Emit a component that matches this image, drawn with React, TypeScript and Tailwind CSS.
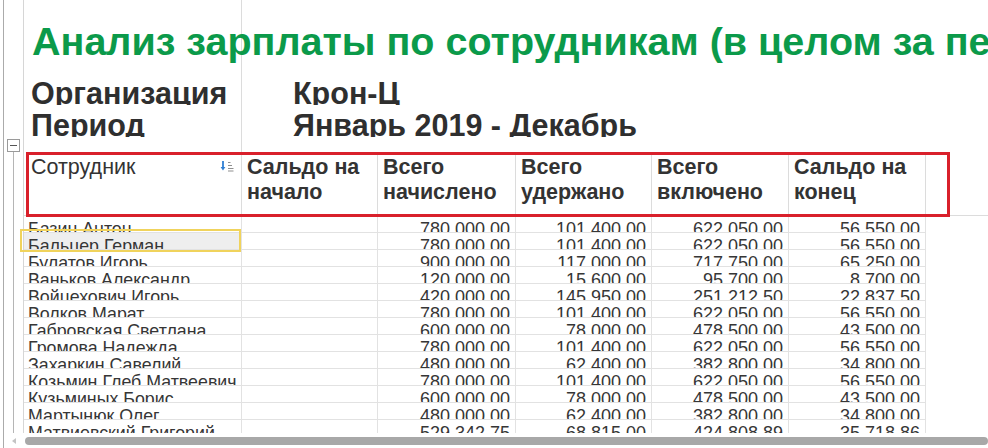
import React from "react";

const colW = ["w-[218px]", "w-[136px]", "w-[138px]", "w-[136px]", "w-[137px]", "w-[137px]"];

const rows: string[][] = [
  ["Базин Антон", "", "780 000.00", "101 400.00", "622 050.00", "56 550.00"],
  ["Бальцер Герман", "", "780 000.00", "101 400.00", "622 050.00", "56 550.00"],
  ["Булатов Игорь", "", "900 000.00", "117 000.00", "717 750.00", "65 250.00"],
  ["Ваньков Александр", "", "120 000.00", "15 600.00", "95 700.00", "8 700.00"],
  ["Войцехович Игорь", "", "420 000.00", "145 950.00", "251 212.50", "22 837.50"],
  ["Волков Марат", "", "780 000.00", "101 400.00", "622 050.00", "56 550.00"],
  ["Габровская Светлана", "", "600 000.00", "78 000.00", "478 500.00", "43 500.00"],
  ["Громова Надежда", "", "780 000.00", "101 400.00", "622 050.00", "56 550.00"],
  ["Захаркин Савелий", "", "480 000.00", "62 400.00", "382 800.00", "34 800.00"],
  ["Козьмин Глеб Матвеевич", "", "780 000.00", "101 400.00", "622 050.00", "56 550.00"],
  ["Кузьминых Борис", "", "600 000.00", "78 000.00", "478 500.00", "43 500.00"],
  ["Мартынюк Олег", "", "480 000.00", "62 400.00", "382 800.00", "34 800.00"],
  ["Матвиевский Григорий", "", "529 342.75", "68 815.00", "424 808.89", "35 718.86"],
];

const headers: string[][] = [
  ["Сальдо на", "начало"],
  ["Всего", "начислено"],
  ["Всего", "удержано"],
  ["Всего", "включено"],
  ["Сальдо на", "конец"],
];

function SortIcon() {
  return (
    <svg width="14" height="13" viewBox="0 0 14 13" className="shrink-0">
      <path d="M3 1 V9" stroke="#2f7fd3" strokeWidth="1.8" />
      <path d="M0.6 7 L3 10.4 L5.4 7 Z" fill="#2f7fd3" />
      <path d="M8 2.5 H10.5 M8 5.5 H12 M8 8.5 H13.5 M8 11 H13.5" stroke="#8f8f8f" strokeWidth="1" />
    </svg>
  );
}

export default function App() {
  return (
    <div className="relative h-[448px] w-[988px] overflow-hidden bg-white font-['Liberation_Sans',Arial,sans-serif] text-[#333333]">
      <div className="flex h-[433px] w-full overflow-hidden">
        {/* gutter */}
        <div className="flex h-full w-[24px] shrink-0">
          <div className="ml-[3px] w-px bg-[#ababab]" />
          <div className="flex w-[19px] flex-col">
            <div className="h-[139px] shrink-0" />
            <div className="ml-[3px] flex h-[13px] w-[13px] shrink-0 items-center justify-center border border-[#9a9a9a] bg-white">
              <div className="h-px w-[7px] bg-[#555555]" />
            </div>
            <div className="ml-[9px] w-px flex-1 bg-[#b5b5b5]" />
          </div>
          <div className="w-px bg-[#d6d6d6]" />
        </div>

        {/* content */}
        <div className="flex min-w-0 flex-1 flex-col">
          {/* title */}
          <div className="flex h-[73px] shrink-0">
            <div className="w-[218px] shrink-0 border-r border-[#dcdcdc] pl-[8px] pt-[21px]">
              <div className="whitespace-nowrap text-[39.5px] font-bold leading-[40px] text-[#0b9a4a]">
                Анализ зарплаты по сотрудникам (в целом за период)
              </div>
            </div>
            <div className="flex-1" />
          </div>
          {/* org */}
          <div className="flex h-[32px] shrink-0 text-[30.5px] font-bold leading-[41px] text-[#2f2f2f]">
            <div className="w-[218px] shrink-0 overflow-hidden whitespace-nowrap border-r border-[#dcdcdc] pl-[7px]">Организация</div>
            <div className="w-[410px] shrink-0 overflow-hidden pl-[51px]">Крон-Ц</div>
          </div>
          {/* period */}
          <div className="flex h-[32px] shrink-0 text-[30.5px] font-bold leading-[41px] text-[#2f2f2f]">
            <div className="w-[218px] shrink-0 overflow-hidden whitespace-nowrap border-r border-[#dcdcdc] pl-[7px]">Период</div>
            <div className="w-[410px] shrink-0 overflow-hidden pl-[51px]">Январь 2019 - Декабрь 2019</div>
          </div>
          {/* gap */}
          <div className="flex h-[15px] shrink-0">
            <div className="w-[218px] shrink-0 border-r border-[#dcdcdc]" />
          </div>
          {/* header */}
          <div className="flex h-[64px] shrink-0 border-b border-[#dcdcdc] text-[21.5px] leading-[25px]">
            <div className={`${colW[0]} flex shrink-0 justify-between border-r border-[#dcdcdc] pl-[7px] pr-[7px] pt-[3px]`}>
              <span>Сотрудник</span>
              <span className="pt-[5px]"><SortIcon /></span>
            </div>
            {headers.map((h, i) => (
              <div key={i} className={`${colW[i + 1]} shrink-0 border-r border-[#dcdcdc] pl-[5px] pt-[3px] font-bold text-[#333333]`}>
                <div className="whitespace-nowrap">{h[0]}</div>
                <div className="whitespace-nowrap">{h[1]}</div>
              </div>
            ))}
          </div>
          {/* data */}
          {rows.map((r, ri) => (
            <div key={ri} className="flex h-[17px] shrink-0 text-[18px] leading-[26px] text-[#363636]">
              {r.map((c, ci) => (
                <div
                  key={ci}
                  className={`${colW[ci]} relative h-[17px] shrink-0 border-b border-r border-[#e2e2e2] ${ci === 0 ? "pl-[4px] text-left text-[17.8px]" : "pr-[5px] text-right"} ${ri === 1 && ci === 0 ? "bg-[#eeeeee]" : ""}`}
                >
                  <div className="h-[16px] overflow-hidden whitespace-nowrap">{c}</div>
                  {ri === 1 && ci === 0 ? (
                    <div className="absolute -bottom-[3px] -left-[4px] -top-[4px] right-0 border-2 border-[#f0d35c]" />
                  ) : null}
                </div>
              ))}
            </div>
          ))}
        </div>
      </div>

      {/* scrollbar */}
      <div className="flex h-[15px] w-full items-center">
        <div className="ml-[3px] h-full w-px bg-[#ababab]" />
        <div className="ml-[8px] h-0 w-0 border-y-[3px] border-r-[4px] border-y-transparent border-r-[#c4c4c4]" />
        <div className="ml-[9px] h-[8px] flex-1 rounded-full bg-[#a8a8a8]" />
      </div>

      {/* red annotation frame */}
      <div className="pointer-events-none absolute left-[26px] top-[152px] h-[65px] w-[924px] border-[3px] border-[#d9202b]" />
    </div>
  );
}
